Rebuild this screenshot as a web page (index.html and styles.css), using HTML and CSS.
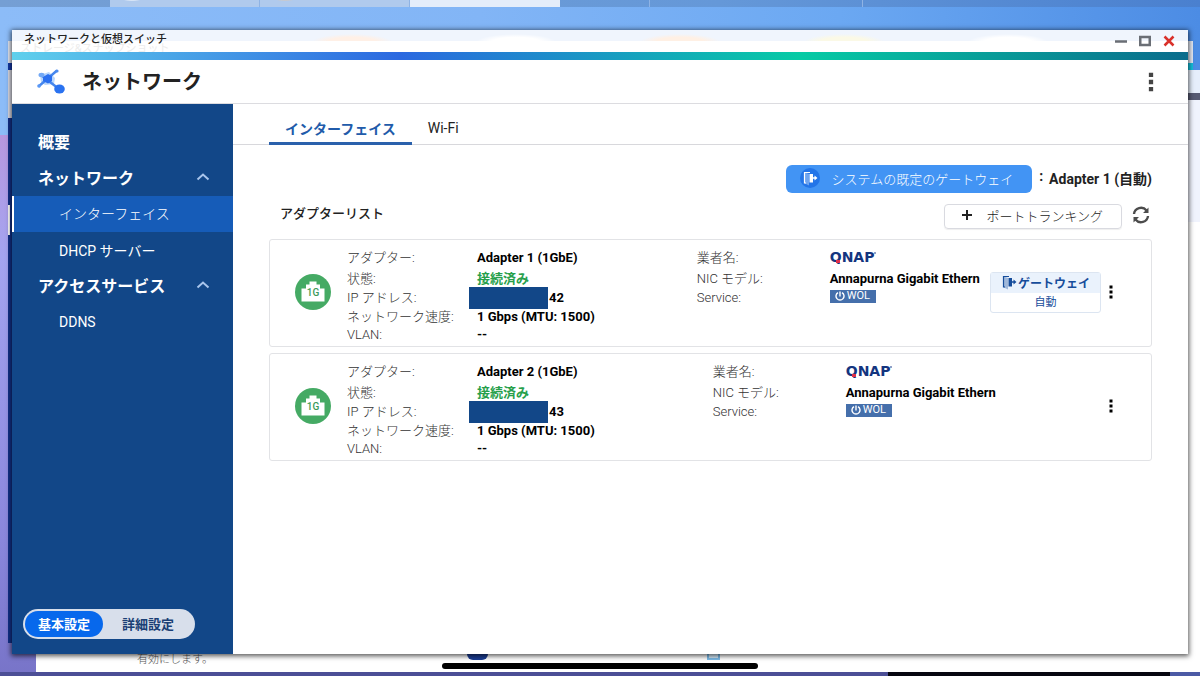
FILE: index.html
```html
<!DOCTYPE html>
<html lang="ja">
<head>
<meta charset="utf-8">
<meta name="viewport" content="width=device-width, initial-scale=1">
<title>ネットワークと仮想スイッチ</title>
<link rel="stylesheet" href="styles.css">
</head>
<body>
<svg class="defs" aria-hidden="true">
  <symbol id="i-gateway" viewBox="0 0 16 16">
    <path d="M8 2.500H2.500V13H4" fill="none" stroke="currentColor" stroke-width="1.200"/>
    <path d="M3 2.500L7 4V15.500L3 13.500Z" fill="currentColor" opacity=".35"/>
    <path d="M7.500 4H11V7.200H12.500V5.500L15.500 8L12.500 10.500V8.800H11V12.500H7.500Z" fill="currentColor"/>
  </symbol>
  <symbol id="i-port" viewBox="0 0 36 36">
    <circle cx="18" cy="18" r="18" fill="#45aa64"/>
    <path d="M14.500 7.500H21.500V10.500H25V14.500H29.500V27.500H6.500V14.500H11V10.500H14.500Z" fill="#fff"/>
  </symbol>
  <symbol id="i-dots" viewBox="0 0 4 14">
    <path d="M.5 .5h3v3h-3zM.5 5.500h3v3h-3zM.5 10.500h3v3h-3z" fill="currentColor"/>
  </symbol>
  <symbol id="i-up" viewBox="0 0 14 8">
    <path d="M1.500 6.500L7 1.500L12.500 6.500" fill="none" stroke="currentColor" stroke-width="2"/>
  </symbol>
  <symbol id="i-power" viewBox="0 0 10 10">
    <path d="M3 1.600A4 4 0 1 0 7 1.600M5 .5V5.500" fill="none" stroke="currentColor" stroke-width="1.400"/>
  </symbol>
</svg>

<div class="desktop">
  <div class="taskbar"><span class="task task-a"></span><span class="task task-b"></span><span class="task task-on"></span><span class="task task-c"></span><span class="task task-d"></span></div>
  <div class="back-window back-settings"><div class="back-head"></div></div>
  <div class="back-window back-storage"><div class="back-stripe"></div><div class="back-panel"></div><div class="back-side"></div></div>
  <div class="back-page">
    <span class="back-text">有効にします。</span>
    <span class="back-icon"></span><span class="back-doc"></span>
  </div>
  <div class="back-floor"></div>

  <main class="window">
    <div class="titlebar">
      <span class="window-ghost" aria-hidden="true">ストレージ&amp;スナップショット</span>
      <span class="window-title">ネットワークと仮想スイッチ</span>
      <div class="window-controls">
        <button aria-label="最小化"><svg width="12" height="12" viewBox="0 0 12 12"><path d="M0 6.500H12" stroke="#6a6e75" stroke-width="2.500"/></svg></button>
        <button aria-label="最大化"><svg width="12" height="12" viewBox="0 0 12 12"><rect x="1.250" y="2" width="9.500" height="8" fill="none" stroke="#6a6e75" stroke-width="2.500"/></svg></button>
        <button aria-label="閉じる"><svg width="12" height="12" viewBox="0 0 12 12"><path d="M1.500 1.500L10.500 10.500M10.500 1.500L1.500 10.500" stroke="#d9312b" stroke-width="2.500"/></svg></button>
      </div>
    </div>
    <div class="stripe"></div>
    <header class="app-header">
      <svg class="app-logo" viewBox="0 0 28 25" aria-hidden="true">
        <path d="M3 6L12 3L18 9L17 15L8 16L4 13Z" fill="#b9d6fb"/>
        <path d="M1.500 17.500L20 1.500M4 6L22 20" stroke="#4586ee" stroke-width="2.400"/>
        <path d="M6 8L11 5L15 7L15 12L11 14.500L6 12Z" fill="#2a6ff0"/>
        <ellipse cx="4.500" cy="6" rx="3" ry="2.200" fill="#72a8f5"/>
        <circle cx="2" cy="17" r="1.800" fill="#5a98f5"/><circle cx="20" cy="2" r="1.600" fill="#4b8aee"/>
        <ellipse cx="22.500" cy="20" rx="5.300" ry="4.500" fill="#2a72f0"/>
      </svg>
      <h1>ネットワーク</h1>
      <button class="header-menu" aria-label="メニュー"><svg width="6" height="20"><use href="#i-dots"/></svg></button>
    </header>
    <div class="app-body">
      <nav class="sidebar">
        <ul class="menu">
          <li><a class="group" href="#">概要</a></li>
          <li><a class="group" href="#">ネットワーク<svg width="14" height="8"><use href="#i-up"/></svg></a></li>
          <li><a class="item current" href="#">インターフェイス</a></li>
          <li><a class="item" href="#">DHCP サーバー</a></li>
          <li><a class="group" href="#">アクセスサービス<svg width="14" height="8"><use href="#i-up"/></svg></a></li>
          <li><a class="item" href="#">DDNS</a></li>
        </ul>
        <div class="mode"><button class="mode-on">基本設定</button><button>詳細設定</button></div>
      </nav>
      <section class="content">
        <div class="tabs"><a class="tab tab-on" href="#">インターフェイス</a><a class="tab" href="#">Wi-Fi</a></div>
        <div class="panel">
          <div class="gateway-row">
            <button class="gateway-button"><span class="gateway-icon"><svg width="16" height="16"><use href="#i-gateway"/></svg></span>システムの既定のゲートウェイ</button>
            <span class="gateway-value"><span>:</span>Adapter 1 (自動)</span>
          </div>
          <div class="list-head">
            <h2>アダプターリスト</h2>
            <button class="trunk-button"><svg width="12" height="12" viewBox="0 0 12 12"><path d="M6 1V11M1 6H11" stroke="#222" stroke-width="2"/></svg>ポートトランキング</button>
            <button class="refresh" aria-label="更新"><svg width="18" height="18" viewBox="0 0 18 18"><path d="M2 8A7 6.800 0 0 1 14.500 4.500M16 10A7 6.800 0 0 1 3.500 13.500" fill="none" stroke="#4c4c4c" stroke-width="2.400"/><path d="M16.500 1.500V7H11ZM1.500 16.500V11H7Z" fill="#4c4c4c"/></svg></button>
          </div>

          <article class="card">
            <div class="port"><svg width="36" height="36"><use href="#i-port"/></svg><span>1G</span></div>
            <dl class="facts">
              <dt>アダプター:</dt><dd>Adapter 1 (1GbE)</dd>
              <dt>状態:</dt><dd class="ok">接続済み</dd>
              <dt>IP アドレス:</dt><dd class="ip"><span class="mask"></span>42</dd>
              <dt>ネットワーク速度:</dt><dd>1 Gbps (MTU: 1500)</dd>
              <dt>VLAN:</dt><dd>--</dd>
            </dl>
            <dl class="facts maker">
              <dt>業者名:</dt><dd><span class="brand">QNAP</span></dd>
              <dt>NIC モデル:</dt><dd>Annapurna Gigabit Ethern</dd>
              <dt>Service:</dt><dd><span class="wol"><svg width="10" height="10"><use href="#i-power"/></svg>WOL</span></dd>
            </dl>
            <div class="badge"><div class="badge-top"><svg width="16" height="16"><use href="#i-gateway"/></svg>ゲートウェイ</div><div class="badge-mode">自動</div></div>
            <button class="more" aria-label="操作"><svg width="4" height="14"><use href="#i-dots"/></svg></button>
          </article>

          <article class="card">
            <div class="port"><svg width="36" height="36"><use href="#i-port"/></svg><span>1G</span></div>
            <dl class="facts">
              <dt>アダプター:</dt><dd>Adapter 2 (1GbE)</dd>
              <dt>状態:</dt><dd class="ok">接続済み</dd>
              <dt>IP アドレス:</dt><dd class="ip"><span class="mask"></span>43</dd>
              <dt>ネットワーク速度:</dt><dd>1 Gbps (MTU: 1500)</dd>
              <dt>VLAN:</dt><dd>--</dd>
            </dl>
            <dl class="facts maker maker-wide">
              <dt>業者名:</dt><dd><span class="brand">QNAP</span></dd>
              <dt>NIC モデル:</dt><dd>Annapurna Gigabit Ethern</dd>
              <dt>Service:</dt><dd><span class="wol"><svg width="10" height="10"><use href="#i-power"/></svg>WOL</span></dd>
            </dl>
            <button class="more" aria-label="操作"><svg width="4" height="14"><use href="#i-dots"/></svg></button>
          </article>
        </div>
      </section>
    </div>
  </main>
  <div class="home-bar"></div>
</div>
</body>
</html>
```
FILE: styles.css
```css
* { box-sizing: border-box; }
body { margin: 0; font-family: Roboto, "Noto Sans CJK JP", sans-serif; font-size: 13px; color: #222; }
button { font: inherit; color: inherit; border: 0; padding: 0; background: none; cursor: pointer; display: flex; align-items: center; }
a { color: inherit; text-decoration: none; }
h1, h2, dl, dd, ul { margin: 0; padding: 0; }
ul { list-style: none; }
svg { display: block; flex: none; }
.defs { position: absolute; width: 0; height: 0; }

/* Desktop and the windows behind */
.desktop {
  position: relative; display: flex; min-height: 100vh; padding: 30px 12px 22px; overflow: hidden;
  background:
    linear-gradient(#b797df 0, #a4a4f0 18%, #8a86dc 60%, #6562b4 100%) 0 135px / 40px 100% no-repeat,
    linear-gradient(90deg, #8cbcf8, #82b5f6 40%, #6ba8f2 70%, #4c8ce4);
}
.taskbar { position: absolute; top: 0; left: 0; right: 0; height: 7px; display: flex; background: linear-gradient(90deg, #759fd4, #6598d8 60%, #4a80cf); padding-left: 110px; }
.task { width: 150px; border-right: 1px solid #8fb3e4; }
.task-a { background: radial-gradient(ellipse at 22px 0, #fff 6px, transparent 12px), #b0caed; }
.task-b { background: radial-gradient(ellipse at 25px 0, #d8c8b8 6px, transparent 12px), #b0caed; }
.task-on { background: #e4edfa; border: 0; }
.task-c { width: 90px; }
.task-d { width: 213px; }
.back-window { position: absolute; }
.back-settings { left: 36px; right: 0; top: 70px; bottom: 4px; background: linear-gradient(#f0f3fd 152px, #fff 152px); }
.back-head { height: 30px; border-bottom: 7px solid #565a72; background: #e6eefb; }
.back-storage { left: 8px; right: 7px; top: 41px; bottom: 33px; display: flex; flex-direction: column; }
.back-storage::before { content: ""; height: 22px; background: #e4e9f4; }
.back-stripe { height: 7px; background: linear-gradient(90deg, #1439a8, #14c0dc); }
.back-panel { width: 28px; height: 48px; background: #dcdde8; }
.back-side { width: 28px; flex: 1; background: linear-gradient(#fff, #fff) 0 87px / 2px 30px no-repeat, #12318c; }
.back-page { position: absolute; left: 36px; right: 0; bottom: 4px; height: 30px; background: #fff; }
.back-text { position: absolute; left: 101px; bottom: 4px; font-size: 11px; line-height: 16px; font-weight: 300; color: #555; }
.back-icon { position: absolute; left: 431px; bottom: 12px; width: 21px; height: 12px; border-radius: 6px; background: #1c3f96; }
.back-doc { position: absolute; left: 671px; bottom: 12px; width: 13px; height: 12px; border: 2px solid #7dbbe8; background: #d7ecfb; }
.back-floor { position: absolute; left: 0; right: 0; bottom: 0; height: 4px; background: linear-gradient(90deg, #4c4f96 74%, #060610 74%, #060610 97.500%, #4c5aa5 97.500%); }
.home-bar { position: absolute; left: 442px; right: 442px; bottom: 7px; height: 6px; border-radius: 3px; background: #000; }

/* Main window */
.window { position: relative; flex: 1; min-width: 0; display: flex; flex-direction: column; background: #fff; box-shadow: 0 1px 5px 1px #000a; }
.titlebar {
  position: relative; height: 22px; display: flex; align-items: center; justify-content: space-between; padding: 0 13px 0 12px; overflow: hidden;
  background:
    linear-gradient(#fff, #fff) 0 11px / 100% 11px no-repeat,
    radial-gradient(ellipse 40px 8px at 340px 12px, #fff0e6 60%, transparent),
    radial-gradient(ellipse 40px 8px at 504px 12px, #fff 60%, transparent),
    radial-gradient(ellipse 40px 8px at 668px 12px, #fff0e4 60%, transparent),
    radial-gradient(ellipse 40px 8px at 832px 12px, #fbf9e6 60%, transparent),
    radial-gradient(ellipse 40px 8px at 996px 12px, #fff 60%, transparent),
    #f0f5fd;
}
.window-title { position: relative; font-size: 11px; font-weight: 500; line-height: 20px; padding-bottom: 2px; }
.window-ghost { position: absolute; left: 8px; top: 11px; font-size: 11px; line-height: 16px; color: #ececec; }
.window-controls { display: flex; gap: 12px; }
.stripe { height: 8px; background: linear-gradient(90deg, #60d0ec, #2b68e0 33%, #06cba5 67%, #0a6c8c); }
.app-header { height: 44px; display: flex; align-items: center; border-bottom: 1px solid #dcdce0; padding: 0 34px 0 25px; }
.app-logo { width: 28px; height: 25px; }
h1 { flex: 1; margin-left: 17px; font-size: 20px; line-height: 28px; font-weight: 700; }
.header-menu { color: #444; }
.app-body { flex: 1; display: flex; }

.sidebar { width: 221px; flex: none; display: flex; flex-direction: column; justify-content: space-between; padding: 20px 0 15px; background: #124788; color: #fff; }
.menu a { display: flex; align-items: center; justify-content: space-between; height: 36px; padding: 0 23px 2px 26px; border-left: 2px solid transparent; }
.menu .group { padding-left: 24px; font-size: 16px; font-weight: 700; }
.menu .group svg { color: #a9c5ec; }
.menu .item { padding-left: 45px; padding-bottom: 0; font-size: 14px; }
.menu .current { padding-bottom: 2px; background: #165cb8; border-color: #fff; font-weight: 300; }
.mode { display: flex; align-self: flex-start; width: 172px; margin-left: 11px; padding: 2px; border-radius: 15px; background: #d8dfeb; color: #1b3f75; }
.mode button { height: 26px; width: 90px; padding-bottom: 2px; justify-content: center; border-radius: 13px; font-size: 13px; font-weight: 700; }
.mode .mode-on { width: 78px; background: #0768ec; color: #fff; }

.content { flex: 1; min-width: 0; }
.tabs { display: flex; height: 41px; padding-left: 36px; border-bottom: 1px solid #d8d8dc; }
.tab { display: flex; align-items: center; padding: 10px 16px 0; height: 41px; font-size: 14px; border-bottom: 3px solid transparent; }
.tab-on { color: #215baa; border-color: #2a61ac; font-weight: 700; }
.panel { padding: 20px 36px 0; }
.gateway-row { display: flex; justify-content: flex-end; align-items: center; gap: 7px; }
.gateway-button { height: 28px; padding: 0 19px 2px 14px; border-radius: 6px; background: #4294f4; color: #fff; font-weight: 300; }
.gateway-icon { display: flex; align-items: center; justify-content: center; width: 20px; height: 20px; margin-right: 12px; border-radius: 50%; background: #2375e8; }
.gateway-value { display: flex; gap: 6px; padding-bottom: 2px; font-size: 14px; font-weight: 700; }
.list-head { display: flex; align-items: center; height: 46px; }
h2 { flex: 1; padding: 0 0 4px 11px; font-size: 13px; line-height: 20px; font-weight: 500; }
.trunk-button { height: 25px; padding: 0 18px 2px 16px; gap: 13px; border: 1px solid #d9dae0; border-radius: 4px; box-shadow: 0 1px 1px #0001; font-weight: 300; }
.refresh { margin: 0 2px 2px 10px; }

.card { display: flex; align-items: flex-start; min-height: 107px; margin-bottom: 6px; padding: 7px 38px 2px 25px; border: 1px solid #e2e3e6; border-radius: 3px; }
.port { position: relative; width: 36px; margin: 27px 16px 0 0; }
.port span { position: absolute; left: 0; right: 0; top: 13px; text-align: center; font-size: 10px; line-height: 12px; color: #3c9a59; font-weight: 500; }
.facts { display: grid; grid-template-columns: 130px auto; grid-template-rows: 21px 21px 18px 19px 18px; align-items: center; line-height: 18px; white-space: nowrap; }
.facts dt { font-weight: 300; color: #333; }
.facts dd { font-weight: 700; color: #000; }
.facts .ok { color: #27a04b; }
.ip { display: flex; align-items: center; }
.mask { width: 79px; height: 22px; margin: -2px 1px -2px -8px; background: #124788; }
.maker { flex: 1; grid-template-columns: 133px auto; grid-template-rows: 21px 21px 18px; margin-left: 102px; }
.maker-wide { margin-left: 118px; }
.brand { position: relative; display: inline-block; font-family: "DejaVu Sans", sans-serif; font-size: 14px; line-height: 18px; color: #14357f; }
.brand::before { content: ""; position: absolute; left: 6px; bottom: 3px; width: 4px; height: 3px; background: #e0304a; }
.brand::after { content: ""; position: absolute; left: 100%; top: 4px; width: 2px; height: 2px; border-radius: 1px; background: #6b80b4; }
.wol { display: flex; align-items: center; gap: 2px; width: 46px; height: 13px; padding-left: 5px; margin-bottom: 4px; background: #456fab; color: #fff; font-size: 11px; font-weight: 400; }
.badge { width: 111px; margin: 25px 8px 0 0; border: 1px solid #dce5f1; border-radius: 3px; color: #174d9b; }
.badge-top { display: flex; align-items: center; justify-content: center; gap: 1px; height: 20px; padding-bottom: 2px; background: #eaf2fc; font-size: 12px; font-weight: 700; }
.badge-mode { height: 19px; line-height: 19px; text-align: center; font-size: 11px; }
.more { margin-top: 38px; color: #000; }
```
